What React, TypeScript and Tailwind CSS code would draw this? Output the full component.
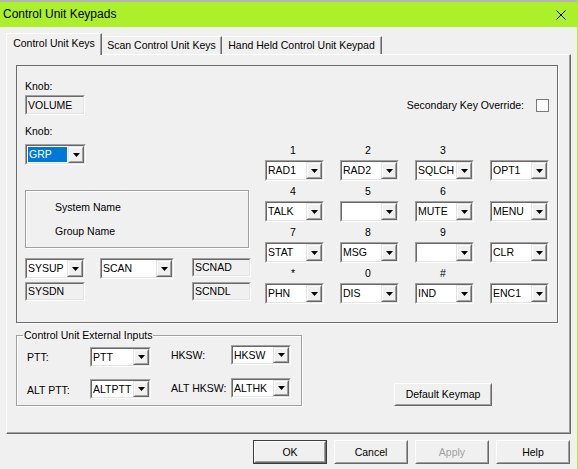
import React from "react";

const Arrow = () => (
  <svg width="7" height="4" viewBox="0 0 7 4">
    <path d="M0 0h7L3.5 4z" fill="#000" />
  </svg>
);

const DropButton = () => (
  <div className="flex w-[16px] shrink-0 border border-t-[#e3e3e3] border-l-[#e3e3e3] border-r-[#696969] border-b-[#696969] bg-[#f0f0f0]">
    <div className="flex flex-1 items-center justify-center border border-t-white border-l-white border-r-[#a0a0a0] border-b-[#a0a0a0]">
      <Arrow />
    </div>
  </div>
);

type BoxProps = { value?: string; className: string; selected?: boolean };

// sunken combo box with the drop button on the right
const Combo = ({ value = "", className, selected }: BoxProps) => (
  <div
    className={`flex shrink-0 border border-t-[#a0a0a0] border-l-[#a0a0a0] border-r-white border-b-white ${className}`}
  >
    <div className="flex min-w-0 flex-1 border border-t-[#696969] border-l-[#696969] border-r-[#e3e3e3] border-b-[#e3e3e3] bg-white">
      <div className="flex min-w-0 flex-1 items-center overflow-hidden whitespace-nowrap">
        {selected ? (
          <span className="m-[1px] flex h-[calc(100%-2px)] flex-1 items-center bg-[#0078d7] pl-[1px] text-white">
            {value}
          </span>
        ) : (
          <span className="pl-[1px]">{value}</span>
        )}
      </div>
      <DropButton />
    </div>
  </div>
);

const ReadBox = ({ value = "", className }: BoxProps) => (
  <div
    className={`flex shrink-0 border border-t-[#a0a0a0] border-l-[#a0a0a0] border-r-white border-b-white ${className}`}
  >
    <div className="flex flex-1 items-center border border-t-[#696969] border-l-[#696969] border-r-[#e3e3e3] border-b-[#e3e3e3] pl-[1px]">
      {value}
    </div>
  </div>
);

const Button = ({
  label,
  className,
  disabled,
  isDefault,
}: {
  label: string;
  className: string;
  disabled?: boolean;
  isDefault?: boolean;
}) => (
  <div className={`flex shrink-0 ${isDefault ? "border border-[#3c3c3c]" : ""} ${className}`}>
    <div className="flex flex-1 border border-t-white border-l-white border-r-[#696969] border-b-[#696969]">
      <div
        className={`flex flex-1 items-center justify-center border border-t-[#f0f0f0] border-l-[#f0f0f0] border-r-[#a0a0a0] border-b-[#a0a0a0] ${
          disabled ? "text-[#a0a0a0]" : ""
        }`}
      >
        {label}
      </div>
    </div>
  </div>
);

const keyRows = [
  { labels: ["1", "2", "3", ""], values: ["RAD1", "RAD2", "SQLCH", "OPT1"] },
  { labels: ["4", "5", "6", ""], values: ["TALK", "", "MUTE", "MENU"] },
  { labels: ["7", "8", "9", ""], values: ["STAT", "MSG", "", "CLR"] },
  { labels: ["*", "0", "#", ""], values: ["PHN", "DIS", "IND", "ENC1"] },
];

const App = () => {
  return (
    <div className="h-[469px] w-[578px] overflow-hidden border-r border-r-[#acef2b] bg-[#f0f0f0] font-['Liberation_Sans',Arial,sans-serif] text-[10.5px] leading-[13px] text-black">
      {/* title bar */}
      <div className="flex h-[27px] items-center justify-between border-t-2 border-t-[#b4b4b4] bg-[#acef2b] pl-[3px] pr-[11px] text-[12px]">
        <span>Control Unit Keypads</span>
        <svg width="10" height="10" viewBox="0 0 10 10">
          <path d="M0.5 0.5L9.5 9.5M9.5 0.5L0.5 9.5" stroke="#000" strokeWidth="1" />
        </svg>
      </div>

      <div className="px-[6px] pt-[6px]">
        {/* tabs */}
        <div className="relative z-10 flex h-[21px] items-end">
          <div className="-mb-[1px] flex h-[22px] w-[96px] items-center justify-center border-t border-l border-t-white border-l-white border-r border-r-[#696969] bg-[#f0f0f0] pb-[2px] shadow-[inset_-1px_0_0_#a0a0a0]">
            Control Unit Keys
          </div>
          <div className="flex h-[18px] w-[120px] items-center justify-center border-t border-t-white border-r border-r-[#696969] shadow-[inset_-1px_0_0_#a0a0a0]">
            Scan Control Unit Keys
          </div>
          <div className="flex h-[18px] w-[160px] items-center justify-center border-t border-t-white border-r border-r-[#696969] shadow-[inset_-1px_0_0_#a0a0a0]">
            Hand Held Control Unit Keypad
          </div>
        </div>

        {/* tab page */}
        <div className="h-[380px] w-[565px] border border-t-white border-l-white border-r-[#696969] border-b-[#696969] pl-[9px] pt-[10px] shadow-[inset_-1px_-1px_0_#a0a0a0]">
          <div className="flex h-[258px] w-[542px] border border-[#6b6b6b] shadow-[1px_1px_0_#fff]">
            {/* left column */}
            <div className="flex w-[234px] flex-col pl-[8px] pt-[14px]">
              <div className="h-[13px]">Knob:</div>
              <ReadBox value="VOLUME" className="mt-[2px] h-[20px] w-[60px]" />
              <div className="mt-[10px] h-[13px]">Knob:</div>
              <Combo value="GRP" selected className="mt-[6px] h-[21px] w-[61px]" />
              <div className="mt-[25px] flex h-[58px] w-[224px] flex-col border border-[#a0a0a0] pl-[29px] pt-[10px] shadow-[1px_1px_0_#fff,inset_1px_1px_0_#fff]">
                <div className="h-[13px]">System Name</div>
                <div className="mt-[11px] h-[13px]">Group Name</div>
              </div>
              <div className="mt-[10px] flex items-start">
                <Combo value="SYSUP" className="h-[21px] w-[60px]" />
                <Combo value="SCAN" className="ml-[15px] h-[21px] w-[74px]" />
                <ReadBox value="SCNAD" className="ml-[18px] h-[19px] w-[59px]" />
              </div>
              <div className="mt-[3px] flex items-start">
                <ReadBox value="SYSDN" className="h-[19px] w-[60px]" />
                <ReadBox value="SCNDL" className="ml-[107px] h-[19px] w-[59px]" />
              </div>
            </div>

            {/* right column */}
            <div className="ml-[14px] flex w-[284px] flex-col pt-[33px]">
              <div className="flex h-[13px] items-center justify-end">
                <span>Secondary Key Override:</span>
                <div className="ml-[12px] h-[13px] w-[13px] border border-[#7a7a7a] bg-white" />
              </div>
              <div className="mt-[28px] flex flex-col">
                {keyRows.map((row, r) => (
                  <div key={r} className="flex gap-x-[16px]">
                    {row.values.map((v, c) => (
                      <div key={c} className="flex w-[59px] flex-col">
                        <div className="flex h-[20px] items-center justify-center pr-[3px]">
                          {row.labels[c]}
                        </div>
                        <Combo value={v} className="h-[21px] w-[59px]" />
                      </div>
                    ))}
                  </div>
                ))}
              </div>
            </div>
          </div>

          {/* external inputs + default keymap */}
          <div className="mt-[6px] flex items-end">
            <fieldset className="w-[286px] border border-[#a0a0a0] pb-[6px] pl-[6px] shadow-[1px_1px_0_#fff,inset_1px_1px_0_#fff]">
              <legend className="px-[1px] leading-[13px]">Control Unit External Inputs</legend>
              <div className="flex">
                <div className="ml-[4px] mt-[5px] flex flex-col gap-y-[12px]">
                  <div className="flex h-[20px] items-center">
                    <span className="w-[63px]">PTT:</span>
                    <Combo value="PTT" className="h-[20px] w-[61px]" />
                  </div>
                  <div className="flex h-[20px] items-center">
                    <span className="w-[63px] pt-[2px]">ALT PTT:</span>
                    <Combo value="ALTPTT" className="h-[20px] w-[61px]" />
                  </div>
                </div>
                <div className="ml-[20px] mt-[3px] flex flex-col gap-y-[13px]">
                  <div className="flex h-[20px] items-center">
                    <span className="w-[60px]">HKSW:</span>
                    <Combo value="HKSW" className="h-[20px] w-[60px]" />
                  </div>
                  <div className="flex h-[20px] items-center">
                    <span className="w-[60px] whitespace-nowrap">ALT HKSW:</span>
                    <Combo value="ALTHK" className="h-[20px] w-[60px]" />
                  </div>
                </div>
              </div>
            </fieldset>
            <Button label="Default Keymap" className="ml-[92px] h-[23px] w-[98px]" />
          </div>
        </div>
      </div>

      {/* dialog buttons */}
      <div className="mt-[6px] flex justify-end gap-[7px] pr-[7px]">
        <Button label="OK" isDefault className="h-[24px] w-[74px]" />
        <Button label="Cancel" className="h-[24px] w-[74px]" />
        <Button label="Apply" disabled className="h-[24px] w-[74px]" />
        <Button label="Help" className="h-[24px] w-[74px]" />
      </div>
    </div>
  );
};

export default App;
